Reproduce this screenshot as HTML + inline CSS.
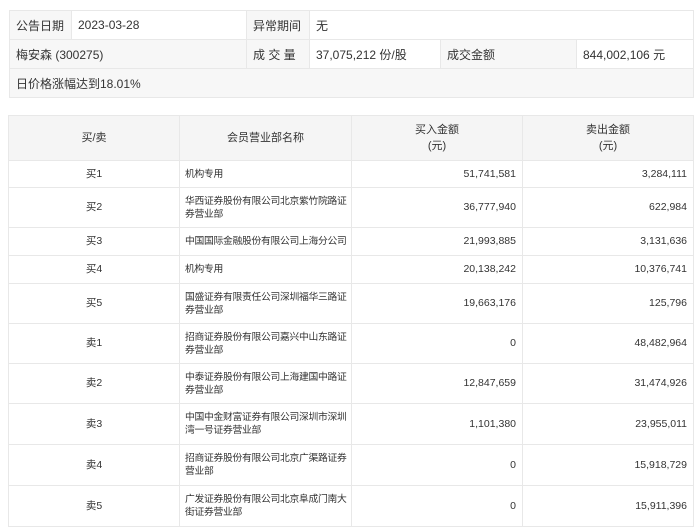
<!DOCTYPE html>
<html><head><meta charset="utf-8"><style>
body{margin:0;background:#fff;font-family:"Liberation Sans","Noto Sans CJK SC",sans-serif;color:#333;width:700px;height:531px;overflow:hidden;position:relative}
table{border-collapse:collapse;position:absolute;table-layout:fixed}
td{border:1px solid #e8e8e8;padding:0 6px;}
#t1{left:9px;top:10px;width:685px;font-size:12px}
#t1 td{height:28px}
#t1 .l{background:#f7f7f7}
#t2{left:8px;top:115px;width:686px;font-size:10.5px}
#t2 td{line-height:13px;padding:0 6px}
#t2 td.n{font-size:9.8px;padding:0 3px 0 5px;letter-spacing:-0.3px}
#t2 th{background:#f5f5f5;border:1px solid #e8e8e8;font-weight:normal;font-size:11px;height:42px;line-height:16px}
.c{text-align:center}.r{text-align:right}
</style></head><body>
<table id="t1">
<colgroup><col style="width:62px"><col style="width:175px"><col style="width:63px"><col style="width:131px"><col style="width:136px"><col></colgroup>
<tr><td class="l">公告日期</td><td>2023-03-28</td><td class="l">异常期间</td><td colspan="3">无</td></tr>
<tr><td colspan="2" class="l">梅安森 (300275)</td><td class="l">成 交 量</td><td>37,075,212 份/股</td><td class="l">成交金额</td><td>844,002,106 元</td></tr>
<tr><td colspan="6" class="l">日价格涨幅达到18.01%</td></tr>
</table>
<table id="t2">
<colgroup><col style="width:171px"><col style="width:172px"><col style="width:171px"><col></colgroup>
<tr><th>买/卖</th><th>会员营业部名称</th><th>买入金额<br>(元)</th><th>卖出金额<br>(元)</th></tr>
<tr style="height:27px"><td class="c">买1</td><td class="n">机构专用</td><td class="r">51,741,581</td><td class="r">3,284,111</td></tr>
<tr style="height:40px"><td class="c">买2</td><td class="n">华西证券股份有限公司北京紫竹院路证券营业部</td><td class="r">36,777,940</td><td class="r">622,984</td></tr>
<tr style="height:28px"><td class="c">买3</td><td class="n">中国国际金融股份有限公司上海分公司</td><td class="r">21,993,885</td><td class="r">3,131,636</td></tr>
<tr style="height:28px"><td class="c">买4</td><td class="n">机构专用</td><td class="r">20,138,242</td><td class="r">10,376,741</td></tr>
<tr style="height:40px"><td class="c">买5</td><td class="n">国盛证券有限责任公司深圳福华三路证券营业部</td><td class="r">19,663,176</td><td class="r">125,796</td></tr>
<tr style="height:40px"><td class="c">卖1</td><td class="n">招商证券股份有限公司嘉兴中山东路证券营业部</td><td class="r">0</td><td class="r">48,482,964</td></tr>
<tr style="height:40px"><td class="c">卖2</td><td class="n">中泰证券股份有限公司上海建国中路证券营业部</td><td class="r">12,847,659</td><td class="r">31,474,926</td></tr>
<tr style="height:41px"><td class="c">卖3</td><td class="n">中国中金财富证券有限公司深圳市深圳湾一号证券营业部</td><td class="r">1,101,380</td><td class="r">23,955,011</td></tr>
<tr style="height:41px"><td class="c">卖4</td><td class="n">招商证券股份有限公司北京广渠路证券营业部</td><td class="r">0</td><td class="r">15,918,729</td></tr>
<tr style="height:41px"><td class="c">卖5</td><td class="n">广发证券股份有限公司北京阜成门南大街证券营业部</td><td class="r">0</td><td class="r">15,911,396</td></tr>
</table>
</body></html>
